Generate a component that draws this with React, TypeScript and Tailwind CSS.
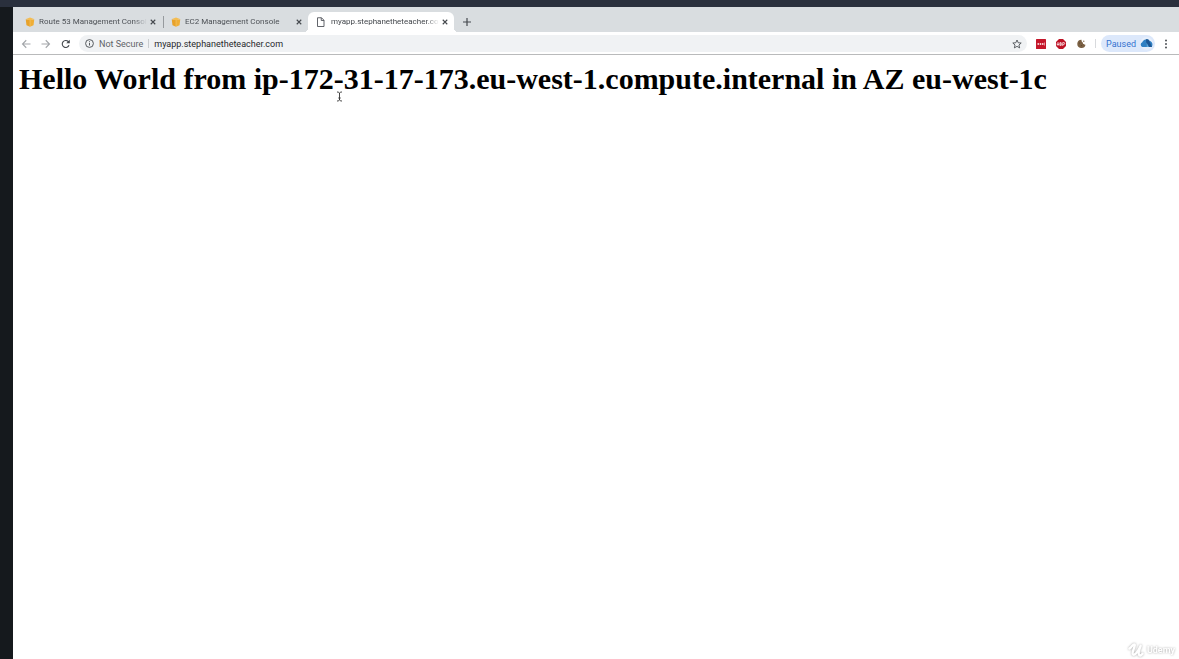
import { ReactNode } from "react";

function AwsIcon() {
  return (
    <svg className="h-[10px] w-[10px] shrink-0" viewBox="0 0 20 20" aria-hidden="true">
      <path d="M2 4 10 1l8 3-8 3z" fill="#f6bd4e" />
      <path d="M1.500 4.500l8.500 2v13l-7-3z" fill="#e8a22a" />
      <path d="M18.500 4.500l-8.500 2v13l7-3z" fill="#efae36" />
      <path d="M9.600 7h.8v12h-.8z" fill="#f9d58a" />
    </svg>
  );
}

function PageIcon() {
  return (
    <svg className="h-[10px] w-[10px] shrink-0" viewBox="0 0 20 20" fill="none" stroke="#50545a" strokeWidth="1.800" aria-hidden="true">
      <path d="M1 1.500h8l5 5V19H1z" />
      <path d="M8.500 1.500v5.500H14" />
    </svg>
  );
}

function CloseButton({ label }: { label: string }) {
  return (
    <button type="button" aria-label={label} className="flex h-3 w-3 shrink-0 items-center justify-center">
      <svg className="h-[6px] w-[6px]" viewBox="0 0 12 12" stroke="#45494e" strokeWidth="2.200" aria-hidden="true">
        <path d="M1.500 1.500l9 9M10.500 1.500l-9 9" />
      </svg>
    </button>
  );
}

function Tab({ title, icon, active = false, divider = false }: { title: string; icon: ReactNode; active?: boolean; divider?: boolean }) {
  return (
    <div className={active ? "relative flex h-5 w-[146px] items-center rounded-t-md bg-white pr-[3px] pl-[9px]" : "relative flex h-5 w-[146px] items-center pr-[3px] pl-[9px]"}>
      <button type="button" className="flex min-w-0 flex-1 items-center gap-1 text-left">
        {icon}
        <span className={"flex-1 overflow-hidden text-[8px] leading-3 whitespace-nowrap [mask-image:linear-gradient(to_right,black_88%,transparent)] " + (active ? "text-[#43474c]" : "text-[#4d5156]")}>
          {title}
        </span>
      </button>
      <CloseButton label={`Close ${title}`} />
      {divider && <span className="absolute top-1 -right-[2px] h-3 w-px bg-[#969a9e]" />}
      {active && (
        <>
          <span className="absolute bottom-0 -left-1 h-1 w-1 bg-[radial-gradient(circle_at_0_0,transparent_4px,white_4px)]" />
          <span className="absolute -right-1 bottom-0 h-1 w-1 bg-[radial-gradient(circle_at_100%_0,transparent_4px,white_4px)]" />
        </>
      )}
    </div>
  );
}

function TabStrip() {
  return (
    <div className="flex h-[25px] items-end bg-[#d9dde0] pl-[3px]">
      <Tab title="Route 53 Management Console" icon={<AwsIcon />} divider />
      <Tab title="EC2 Management Console" icon={<AwsIcon />} />
      <Tab title="myapp.stephanetheteacher.com" icon={<PageIcon />} active />
      <button type="button" aria-label="New tab" className="ml-[7px] flex h-5 w-3 items-center justify-center">
        <svg className="h-2 w-2" viewBox="0 0 16 16" stroke="#45494e" strokeWidth="2.400" aria-hidden="true">
          <path d="M8 0v16M0 8h16" />
        </svg>
      </button>
    </div>
  );
}

function Toolbar() {
  return (
    <div className="flex h-[23px] items-center border-b border-[#b9babb] bg-white pt-px pr-[7px] pl-[7px]">
      <div className="flex gap-2">
        <button type="button" aria-label="Back" className="flex h-3 w-3 items-center justify-center">
          <svg className="h-[10px] w-[10px]" viewBox="0 0 20 20" fill="none" stroke="#a3a6aa" strokeWidth="2.200" aria-hidden="true">
            <path d="M19 10H3M10.500 2.500L3 10l7.500 7.500" />
          </svg>
        </button>
        <button type="button" aria-label="Forward" className="flex h-3 w-3 items-center justify-center">
          <svg className="h-[10px] w-[10px]" viewBox="0 0 20 20" fill="none" stroke="#a3a6aa" strokeWidth="2.200" aria-hidden="true">
            <path d="M1 10h16M9.500 2.500L17 10l-7.500 7.500" />
          </svg>
        </button>
        <button type="button" aria-label="Reload" className="flex h-3 w-3 items-center justify-center">
          <svg className="h-[10px] w-[10px]" viewBox="0 0 20 20" fill="none" stroke="#45494e" strokeWidth="2.200" aria-hidden="true">
            <path d="M16 12.500a7 7 0 1 1-1.500-7.500L16.500 7" />
            <path d="M17.500 1.500v7h-7z" fill="#45494e" stroke="none" />
          </svg>
        </button>
      </div>
      <div className="ml-[7px] flex h-[17px] min-w-0 flex-1 items-center rounded-full bg-[#f0f2f4] pr-1 pl-[6px]">
        <svg className="h-[9px] w-[9px] shrink-0" viewBox="0 0 18 18" fill="none" stroke="#45494e" strokeWidth="1.800" aria-hidden="true">
          <circle cx="9" cy="9" r="7.800" />
          <path d="M9 8v5M9 4.500v2" />
        </svg>
        <label htmlFor="address" className="ml-[5px] text-[9px] leading-3 whitespace-nowrap text-[#5f6368]">Not Secure</label>
        <span className="mx-[5px] h-[9px] w-px bg-[#c9cccf]" />
        <input id="address" type="text" defaultValue="myapp.stephanetheteacher.com" className="h-3 min-w-0 flex-1 bg-transparent text-[9px] leading-3 text-[#27292c] outline-none" />
        <button type="button" aria-label="Bookmark this page" className="flex h-3 w-3 items-center justify-center">
          <svg className="h-[10px] w-[10px]" viewBox="0 0 20 20" fill="none" stroke="#45494e" strokeWidth="1.700" aria-hidden="true">
            <path d="M10 2l2.400 5.500 6 .5-4.500 4 1.400 5.800L10 14.700l-5.300 3.100L6.100 12 1.600 8l6-.5z" />
          </svg>
        </button>
      </div>
      <div className="ml-2 flex gap-2">
        <button type="button" aria-label="Password manager" className="flex h-3 w-3 items-center justify-center">
          <svg className="h-[10px] w-[10px]" viewBox="0 0 20 20" aria-hidden="true">
            <rect width="20" height="20" rx="1" fill="#c4162a" />
            <g fill="#fbd9dc">
              <circle cx="4.500" cy="10" r="1.800" />
              <circle cx="9" cy="10" r="1.800" />
              <circle cx="13.500" cy="10" r="1.800" />
              <path d="M16.300 7h1.200v6h-1.200z" />
            </g>
          </svg>
        </button>
        <button type="button" aria-label="Ad blocker" className="flex h-3 w-3 items-center justify-center">
          <svg className="h-[10px] w-[10px]" viewBox="0 0 20 20" aria-hidden="true">
            <path d="M6 0h8l6 6v8l-6 6H6l-6-6V6z" fill="#bd1124" />
            <g fill="none" stroke="#fff" strokeWidth="1.500">
              <path d="M2.500 13V9l1.500-2 1.500 2v4M2.500 11h3M8 7v6h1.500a1.500 1.500 0 0 0 0-3H8M8 7h1.300a1.500 1.500 0 0 1 0 3M13.500 14V7h2a1.800 1.800 0 0 1 0 3.800h-2" />
            </g>
          </svg>
        </button>
        <button type="button" aria-label="Cookies" className="flex h-3 w-3 items-center justify-center">
          <svg className="h-[10px] w-[10px]" viewBox="0 0 20 20" aria-hidden="true">
            <path d="M11 1.500a8.300 8.300 0 1 0 8 10c-1.500.5-2.500 0-2.500-1.500-2 .3-3-.5-2.500-2.500C12 7 11 4 11 1.500z" fill="#7a6043" />
            <circle cx="15.500" cy="4.500" r="1.500" fill="#8f785d" />
            <circle cx="7" cy="8" r="1.100" fill="#5c452c" />
            <circle cx="11" cy="13" r="1.200" fill="#5c452c" />
          </svg>
        </button>
      </div>
      <span className="mr-[5px] ml-2 h-[9px] w-px bg-[#d8dadd]" />
      <button type="button" className="flex h-[17px] items-center gap-1 rounded-full bg-[#dce8fb] pr-[2px] pl-[5px] text-[9px] leading-3 text-[#3472cf]">
        Paused
        <svg className="h-[13px] w-[13px] rounded-full" viewBox="0 0 26 26" aria-hidden="true">
          <rect width="26" height="26" fill="#e7effb" />
          <path d="M5 20a5 5 0 0 1-.5-9.500C7 4 17 2 19 8c5 0 8 7 5 12z" fill="#2f80c3" />
          <path d="M12 4.500c5-1 7 2 7 4.500l5 11H13z" fill="#1d5794" />
          <path d="M13 20V11l5 9z" fill="#5ba9df" />
        </svg>
      </button>
      <button type="button" aria-label="Browser menu" className="ml-[5px] flex h-3 w-3 items-center justify-center">
        <svg className="h-[10px] w-[10px]" viewBox="0 0 20 20" fill="#45494e" aria-hidden="true">
          <circle cx="10" cy="3" r="1.900" />
          <circle cx="10" cy="10" r="1.900" />
          <circle cx="10" cy="17" r="1.900" />
        </svg>
      </button>
    </div>
  );
}

export default function App() {
  return (
    <div className="flex min-h-screen flex-col bg-[#2a303d] pt-[7px] font-['Roboto','Liberation_Sans',sans-serif]">
      <div className="flex flex-1">
        <div className="w-[13px] shrink-0 bg-[#15191d]" />
        <div className="flex min-w-0 flex-1 flex-col bg-white">
          <TabStrip />
          <Toolbar />
          <main className="relative flex-1 px-[6px] pt-[6px]">
            <h1 className="font-['Liberation_Serif',serif] text-[30px] leading-9 font-bold text-black">
              Hello World from ip-172-31-17-173.eu-west-1.compute.internal in AZ eu-west-1c
            </h1>
            <svg className="absolute top-9 left-[323px] h-[11px] w-[7px]" viewBox="0 0 14 22" fill="none" stroke="#333" strokeWidth="1.800" aria-hidden="true">
              <path d="M2 2c3 0 5 1 5 3 0-2 2-3 5-3M7 4v14M2 20c3 0 5-1 5-3 0 2 2 3 5 3M4.500 14h5" />
            </svg>
          </main>
          <footer className="flex items-center justify-end gap-[3px] pr-1 pb-px text-white drop-shadow-[0_0_1px_rgba(0,0,0,0.35)]">
            <svg className="h-[14px] w-[16px]" viewBox="0 0 34 30" fill="none" stroke="currentColor" strokeWidth="5" strokeLinecap="round" strokeLinejoin="round" aria-hidden="true">
              <path d="M3 12C8 9 10 3 13 3c5 0-5 15-3 20 3 7 12-5 17-17-3 8-6 17-3 20 2 2 5-1 7-3" />
            </svg>
            <span className="text-[9px] leading-4 font-semibold">Udemy</span>
          </footer>
        </div>
      </div>
    </div>
  );
}
